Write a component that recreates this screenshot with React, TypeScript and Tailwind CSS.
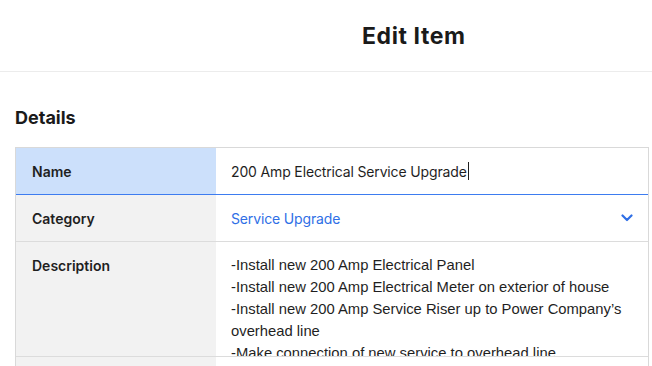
import React from "react";

export default function App() {
  const lines = [
    "-Install new 200 Amp Electrical Panel",
    "-Install new 200 Amp Electrical Meter on exterior of house",
    "-Install new 200 Amp Service Riser up to Power Company\u2019s overhead line",
    "-Make connection of new service to overhead line",
  ];
  return (
    <div className="w-[652px] h-[366px] overflow-hidden bg-white text-[#1f1f1f]" style={{ fontFamily: "Inter, 'Liberation Sans', sans-serif" }}>
      <div className="h-[72px] border-b border-[#ececec] flex items-center">
        <div className="pl-[362px] text-[23px] font-bold tracking-[0.6px] text-[#1a1a1a] pt-[2px]">Edit Item</div>
      </div>
      <div className="px-[15px]">
        <div className="pt-[34px] pb-[17px] text-[18px] font-bold text-[#1a1a1a] leading-[24px]">Details</div>
        <div className="border border-[#d9d9d9] border-b-0 w-[634px]">
          <div className="flex h-[47px] border-b border-[#3d7cf0]">
            <div className="w-[200px] bg-[#cce0fb] flex items-center pl-[16px] text-[14px] font-semibold">Name</div>
            <div className="flex-1 flex items-center pl-[15px] text-[14px] tracking-[-0.15px] text-[#1f1f1f]">
              200 Amp Electrical Service Upgrade<span className="inline-block w-[1px] h-[18px] bg-[#1f1f1f] ml-[1px]" />
            </div>
          </div>
          <div className="flex h-[47px] border-b border-[#dcdcdc]">
            <div className="w-[200px] bg-[#f2f2f2] flex items-center pl-[16px] text-[14px] font-semibold">Category</div>
            <div className="flex-1 flex items-center justify-between pl-[15px] pr-[15px] text-[14px] tracking-[-0.15px] text-[#2f6fe6]">
              <span>Service Upgrade</span>
              <svg width="12" height="8" viewBox="0 0 12 8" fill="none">
                <path d="M1.5 1.5 L6 6 L10.5 1.5" stroke="#2f6fe6" strokeWidth="2.2" strokeLinecap="round" strokeLinejoin="round" />
              </svg>
            </div>
          </div>
          <div className="flex h-[115px] border-b border-[#dcdcdc]">
            <div className="w-[200px] bg-[#f2f2f2] pl-[16px] pt-[13px] text-[14px] font-semibold">Description</div>
            <div className="flex-1 overflow-hidden pl-[15px] pr-[20px] pt-[12px] text-[14.8px] leading-[22px] text-[#1f1f1f]" style={{ fontFamily: "'Liberation Sans', sans-serif" }}>
              {lines.map((l, i) => (
                <div key={i}>{l}</div>
              ))}
            </div>
          </div>
          <div className="flex h-[20px]">
            <div className="w-[200px] bg-[#f2f2f2]" />
            <div className="flex-1" />
          </div>
        </div>
      </div>
    </div>
  );
}
